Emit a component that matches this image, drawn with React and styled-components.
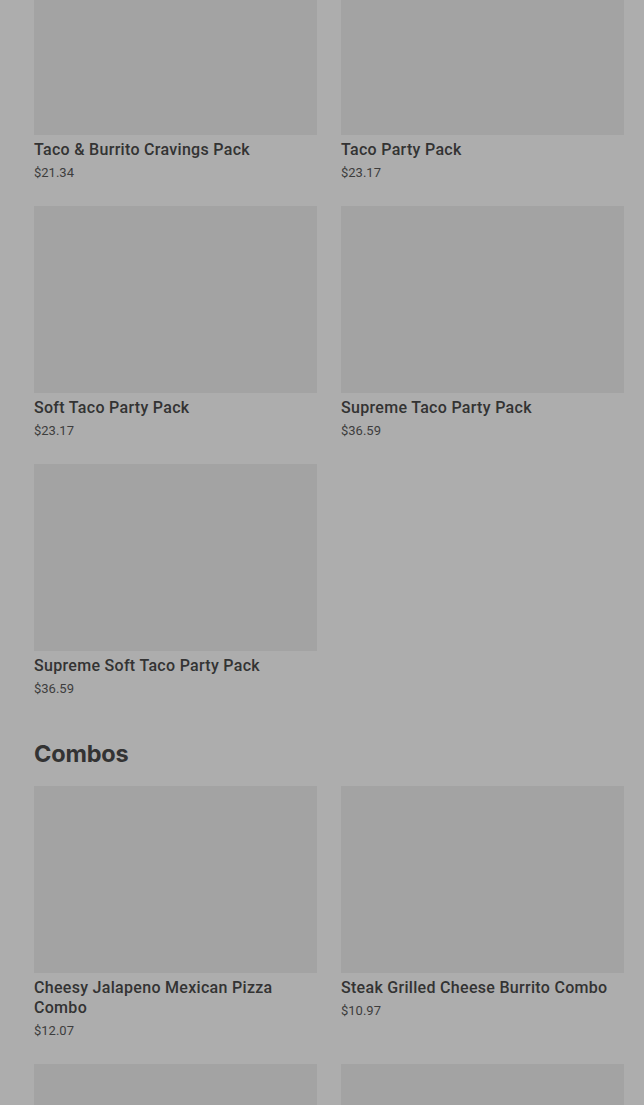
import React from "react";
import styled, { createGlobalStyle } from "styled-components";

const Global = createGlobalStyle`
  html, body { margin: 0; padding: 0; background: #adadad; }
  body { font-family: Roboto, "Liberation Sans", sans-serif; overflow: hidden; }
`;

const Page = styled.div`
  padding: 0 20px 0 34px;
  margin-top: -52px;
  display: flex;
  flex-direction: column;
`;

const Section = styled.section`
  display: flex;
  flex-direction: column;
  margin-bottom: 40px;
`;

const Heading = styled.h2`
  margin: 0 0 16px;
  font-family: Inter, Roboto, sans-serif;
  font-size: 23.5px;
  line-height: 32px;
  font-weight: 700;
  color: #333333;
  letter-spacing: -0.2px;
`;

const Grid = styled.div`
  display: grid;
  grid-template-columns: 1fr 1fr;
  column-gap: 24px;
  row-gap: 24px;
`;

const Card = styled.div`
  display: flex;
  flex-direction: column;
`;

const Thumb = styled.div`
  height: 187px;
  background: #a3a3a3;
`;

const Title = styled.div`
  margin-top: 5px;
  font-size: 16px;
  line-height: 20px;
  font-weight: 500;
  letter-spacing: 0.3px;
  color: #333333;
`;

const Price = styled.div`
  margin-top: 4px;
  font-size: 13px;
  line-height: 18px;
  color: #3d3d3d;
`;

const packs = [
  ["Taco & Burrito Cravings Pack", "$21.34"],
  ["Taco Party Pack", "$23.17"],
  ["Soft Taco Party Pack", "$23.17"],
  ["Supreme Taco Party Pack", "$36.59"],
  ["Supreme Soft Taco Party Pack", "$36.59"],
];

const combos = [
  ["Cheesy Jalapeno Mexican Pizza Combo", "$12.07"],
  ["Steak Grilled Cheese Burrito Combo", "$10.97"],
  ["", ""],
  ["", ""],
];

function Item({ name, price }) {
  return (
    <Card>
      <Thumb />
      {name && <Title>{name}</Title>}
      {price && <Price>{price}</Price>}
    </Card>
  );
}

export default function App() {
  return (
    <>
      <Global />
      <Page>
        <Section>
          <Grid>
            {packs.map(([n, p]) => (
              <Item key={n} name={n} price={p} />
            ))}
          </Grid>
        </Section>
        <Section>
          <Heading>Combos</Heading>
          <Grid>
            {combos.map(([n, p], i) => (
              <Item key={i} name={n} price={p} />
            ))}
          </Grid>
        </Section>
      </Page>
    </>
  );
}
